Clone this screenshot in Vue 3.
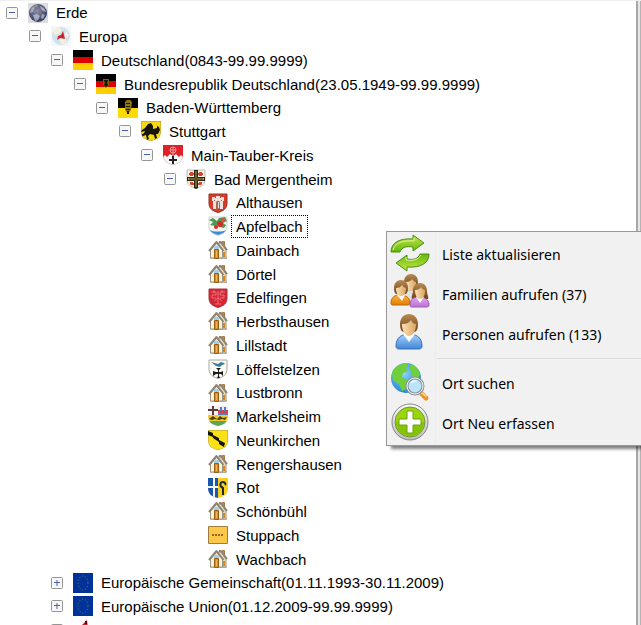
<template>
  <div class="app">
    <!-- Symbole -->
    <svg class="sprite" aria-hidden="true">
      <defs>
        <linearGradient id="g-green" x1="0" y1="0" x2="0" y2="1">
          <stop offset="0" stop-color="#c8e64a" />
          <stop offset="1" stop-color="#62b80c" />
        </linearGradient>
        <linearGradient id="g-blue" x1="0" y1="0" x2="0" y2="1">
          <stop offset="0" stop-color="#a9d2fa" />
          <stop offset="1" stop-color="#3f86d8" />
        </linearGradient>
        <linearGradient id="g-orange" x1="0" y1="0" x2="0" y2="1">
          <stop offset="0" stop-color="#fbb33c" />
          <stop offset="1" stop-color="#e27d00" />
        </linearGradient>
        <linearGradient id="g-violet" x1="0" y1="0" x2="0" y2="1">
          <stop offset="0" stop-color="#e3a6ee" />
          <stop offset="1" stop-color="#bd70d4" />
        </linearGradient>
        <linearGradient id="g-hair" x1="0" y1="0" x2="0" y2="1">
          <stop offset="0" stop-color="#b98a52" />
          <stop offset="1" stop-color="#6e431b" />
        </linearGradient>
        <linearGradient id="g-skin" x1="0" y1="0" x2="1" y2="0">
          <stop offset="0" stop-color="#fbe0b4" />
          <stop offset="1" stop-color="#dba664" />
        </linearGradient>
        <linearGradient id="g-ring" x1="0" y1="0" x2="0" y2="1">
          <stop offset="0" stop-color="#fafafa" />
          <stop offset="1" stop-color="#bdbdbd" />
        </linearGradient>
        <radialGradient id="g-sea" cx=".4" cy=".35" r=".7">
          <stop offset="0" stop-color="#8fd6fb" />
          <stop offset="1" stop-color="#1f7fd0" />
        </radialGradient>
        <radialGradient id="g-earth" cx=".45" cy=".4" r=".6">
          <stop offset="0" stop-color="#8a90ac" />
          <stop offset="1" stop-color="#343b62" />
        </radialGradient>
        <clipPath id="c-shield">
          <path d="M0 0h20v10c0 6-4 9-10 10C4 19 0 16 0 10z" />
        </clipPath>
      </defs>

      <symbol id="i-erde" viewBox="0 0 20 20">
        <path fill="#dcdcde" d="M0 0h20v20H0z" />
        <circle cx="10" cy="10" r="9" fill="url(#g-earth)" />
        <g opacity=".7">
          <path fill="#c5cad8" d="M3 6c2-3 5-4 7-4l-1 3-3 1-1 3-3 1zM12 3l4 2 2 4-3-1-2-2zM5 12l4-1 3 2-2 4-3 1zM14 11l3 1-2 4-2-1z" />
          <path fill="#8b786e" d="M6 4l4-1 1 2-4 2zM10 8l4 1-1 2-3-1z" />
        </g>
      </symbol>
      <symbol id="i-europa" viewBox="0 0 20 20">
        <path fill="#f3f7fa" d="M0 0h20v20H0z" />
        <circle cx="10" cy="10" r="9" fill="#cfe3ee" />
        <path fill="#f5f0dc" d="M3 4l5-3 3 3-3 4-5 1zM8 13l6-1 2 3-5 4zM15 5l3 4-2 3-2-3z" />
        <path fill="#cf2430" d="M12 5l2 8-5-1-3 2 1-4 3-1z" />
      </symbol>
      <symbol id="i-de" viewBox="0 0 20 20">
        <path d="M0 0h20v7H0z" />
        <path fill="#dd0000" d="M0 7h20v6H0z" />
        <path fill="#ffce00" d="M0 13h20v7H0z" />
      </symbol>
      <symbol id="i-brd" viewBox="0 0 20 20">
        <path d="M0 0h20v7H0z" />
        <path fill="#dd0000" d="M0 7h20v6H0z" />
        <path fill="#ffce00" d="M0 13h20v7H0z" />
        <path fill="#7d5f00" d="M7 5h6v6l-3 3-3-3z" />
        <path fill="#1b1300" d="M8 6h4l-1 3 1 2-2 2-2-2 1-2z" />
      </symbol>
      <symbol id="i-bw" viewBox="0 0 20 20">
        <path d="M0 0h20v10H0z" />
        <path fill="#fddc05" d="M0 10h20v10H0z" />
        <path fill="#8f7810" d="M7 4l2-2h3l2 2-1 8-3 4-3-4z" />
        <path fill="#241c02" d="M8 5h4v1H8zM8 8h4v1H8zM8 11h4v1H8zM9 13h2v3H9z" />
      </symbol>
      <symbol id="i-stuttgart" viewBox="0 0 20 20">
        <g clip-path="url(#c-shield)">
          <path fill="#f8d810" stroke="#a59130" stroke-width="1" d="M0 0h20v10c0 6-4 9-10 10C4 19 0 16 0 10z" />
          <path fill="#17150a" d="M7 3l3-1 2 3v3l4-1v-2l2 1 1 3-2 4-2 0 1 4-2 1-1-4-4-1-2 2 1 3-2 1-1-5-3 1-1 2-1-3 3-2 1-2-4 1 1-2 3-2z" />
        </g>
      </symbol>
      <symbol id="i-mtk" viewBox="0 0 20 20">
        <g clip-path="url(#c-shield)">
          <path fill="#f8f6f6" stroke="#b9a8a8" d="M0 0h20v10c0 6-4 9-10 10C4 19 0 16 0 10z" />
          <path fill="#e02228" d="M0 0h20v12l-2-2-2 2-3-3-3 2-3-2-3 3-2-2-2 2z" />
          <circle cx="10" cy="5" r="3" fill="none" stroke="#ee9c9c" />
          <path stroke="#ee9c9c" d="M10 2v8M7 5h6" />
          <path fill="#252525" d="M9 11h2v3h3v2h-3v3H9v-3H6v-2h3z" />
        </g>
      </symbol>
      <symbol id="i-mergentheim" viewBox="0 0 20 20">
        <path fill="#f4f2ec" stroke="#bdbab2" d="M1 1h18v9c0 6-4 8-9 9.500-5-1.500-9-3.500-9-9.500z" />
        <path fill="#e0402f" d="M4 3h3v1h1v2H7v1H4V6H3V4h1zM13 3h3v1h1v2h-1v1h-3V6h-1V4h1zM4 13h3v1h1v2H5l-1-1zM13 13h3v2l-1 1h-3v-2h1z" />
        <path fill="#2b2811" d="M8 1h4v7h7v4h-7v7l-2 1-2-1v-7H1V8h7z" />
        <path fill="#b7a350" d="M9 2h2v16H9zM2 9h16v2H2z" />
        <path stroke="#2b2811" d="M10 2v16M3 10h14" />
      </symbol>
      <symbol id="i-althausen" viewBox="0 0 20 20">
        <path fill="#da3a26" stroke="#8f3429" d="M1 1h18v9c0 6-4 8-9 9.500-5-1.500-9-3.500-9-9.500z" />
        <path fill="#ece4dc" d="M4 4h3v1h1V3h4v2h1V4h3v4h-1v8H5V8H4z" />
        <path fill="#a8685c" d="M8 10c0-3 4-3 4 0v6H8zM6 7h1v1H6zM13 7h1v1h-1z" />
        <path fill="#ece4dc" d="M10 9h1v6h-1z" />
      </symbol>
      <symbol id="i-apfelbach" viewBox="0 0 20 20">
        <path fill="#f7f7f3" stroke="#d0d4cd" d="M1 1h18v9c0 6-4 8-9 9.500-5-1.500-9-3.500-9-9.500z" />
        <path fill="#4b9b50" d="M1 4l4-2 4 3 2-3 6-1 2 4-4 2 3 2-2 3-4-1-2-3-3 2-5-1 3-3z" />
        <circle cx="12" cy="8" r="3" fill="#d62a28" />
        <circle cx="8" cy="11" r="2" fill="#d62a28" />
        <circle cx="15" cy="4" r="2" fill="#dc5148" />
        <path fill="#3b8ed4" d="M2 14c4 2 12 2 16 0-1 2-4 4-8 5-4-1-7-3-8-5z" />
      </symbol>
      <symbol id="i-haus" viewBox="0 0 20 20">
        <path fill="#c9c9c4" d="M2 17h17v2H2z" />
        <path fill="#d98a3a" stroke="#a87442" d="M14.500 1.500h2v7h-2z" />
        <path fill="#e6dcc2" stroke="#9c9484" d="M10 3h3l5 7v8h-6z" />
        <path fill="#fbf3da" stroke="#9c9484" d="M2.500 10L8.500 3.500l6 6.500v8h-12z" />
        <path fill="none" stroke="#8f8472" stroke-width="2" stroke-linejoin="round" d="M1 11l7.500-9 7 9M11 2h2l6 8" />
        <path fill="#de8d1e" stroke="#9a5d14" d="M6.500 9.500h4v9h-4z" />
        <path fill="#9fcdf0" d="M6 8c0-3 5-3 5 0v1H6z" />
        <path fill="#f5b554" d="M8 11h1v6H8z" />
        <path fill="#d9861c" d="M15 12h2v5h-2z" />
      </symbol>
      <symbol id="i-edelfingen" viewBox="0 0 20 20">
        <path fill="#d92331" stroke="#a33640" d="M1 1h18v9c0 6-4 8-9 9.500-5-1.500-9-3.500-9-9.500z" />
        <path fill="none" stroke="#e3757d" d="M3 4h5v3H4v3h4M17 4h-5v3h4v3h-4M6 2v3M14 2v3M10 3v13M6 13l4-3 4 3M7 16h6" />
      </symbol>
      <symbol id="i-loeffel" viewBox="0 0 20 20">
        <path fill="#f8f9f1" stroke="#a9aa9c" d="M1 1h18v9c0 6-4 8-9 9.500-5-1.500-9-3.500-9-9.500z" />
        <path fill="#3b7c9b" d="M3 3l7 2 3-2 3 1 1 1-3 1-2 2-4-1z" />
        <path fill="#1c1c1c" d="M8 9h5l-2 2v2h2l2-1v5l-2-2h-2v2l1 2H9l1-2v-2H8l-3 2v-5l3 1h2v-2z" />
      </symbol>
      <symbol id="i-markelsheim" viewBox="0 0 20 20">
        <g clip-path="url(#c-shield)">
          <path fill="#f4f1ee" d="M0 0h10v9H0z" />
          <path fill="#5b3a3c" d="M4 0h2v3h4v2H6v4H4V5H0V3h4z" />
          <path fill="#e8eef6" d="M10 0h10v5H10z" />
          <path fill="#d9424c" d="M10 4h10v5H10z" />
          <path fill="#4c7fc4" d="M12 1h2v4h-2zM16 1h2v4h-2zM10 7h10v2H10z" />
          <path fill="#f2c92f" d="M0 9h20v6H0z" />
          <path fill="#4c4216" d="M1 13l4-3 4 3 3-3 3 2 4-1-2 3-3-1-3 1-4-1-3 1z" />
          <path fill="#5fa653" d="M0 15h20v5H0z" />
        </g>
      </symbol>
      <symbol id="i-neunkirchen" viewBox="0 0 20 20">
        <g clip-path="url(#c-shield)">
          <path fill="#fbe116" stroke="#a69b3b" d="M0 0h20v10c0 6-4 9-10 10C4 19 0 16 0 10z" />
          <path fill="#13130c" d="M0 1l5 2v4L0 5zM5 5l6 3v4L5 8zM11 10l6 3-1 4-5-3z" />
        </g>
      </symbol>
      <symbol id="i-rot" viewBox="0 0 20 20">
        <g clip-path="url(#c-shield)">
          <path fill="#1c55ad" d="M0 0h10v20H0z" />
          <path fill="#f3f6fb" d="M5 0h2v20H5zM0 8h10v2H0z" />
          <path fill="#f9cf1d" d="M10 0h10v20H10z" />
          <path fill="none" stroke="#1d2a38" stroke-width="2" d="M15 17v-7c-4-2-3-6 0-6 2 0 3 2 2 3" />
        </g>
      </symbol>
      <symbol id="i-stuppach" viewBox="0 0 20 20">
        <path fill="#fdc84a" stroke="#9c7d40" stroke-width="1" d="M.5 1.500h19v17H.5z" />
        <path stroke="#8b6c27" stroke-width="2" stroke-dasharray="2 1" d="M4 10h12" />
      </symbol>
      <symbol id="i-eu" viewBox="0 0 20 20">
        <path fill="#003399" d="M0 0h20v20H0z" />
        <ellipse cx="10" cy="10" rx="5" ry="7" fill="none" stroke="#74805c" stroke-dasharray="1 2" />
      </symbol>
      <symbol id="i-ewg" viewBox="0 0 20 20">
        <path fill="#c8202c" d="M14 0l1 8-5 6-6 2 3-9z" />
        <path fill="#3d1518" d="M12 1h2v3h-2z" />
      </symbol>

      <symbol id="m-refresh" viewBox="0 0 40 40">
        <path stroke="#4b8f12" stroke-linejoin="round" fill="url(#g-green)" d="M1 18C1 9 9 4 23 5V1l11 8-11 8v-4C16 12 12 13 10 18z" />
        <path fill="none" stroke="#e3f59b" d="M3 16C5 9 12 6 24 7V4" />
        <g transform="rotate(180 20 19)">
          <path stroke="#4b8f12" stroke-linejoin="round" fill="url(#g-green)" d="M1 18C1 9 9 4 23 5V1l11 8-11 8v-4C16 12 12 13 10 18z" />
        </g>
        <path fill="none" stroke="#e3f59b" d="M31 21c-3 5-8 6-15 5v-3" />
      </symbol>
      <symbol id="m-family" viewBox="0 0 40 40">
        <path fill="#e3e3e3" stroke="#999" d="M12 24c0-6 4-8 8-8s9 2 9 8v4H12z" />
        <path fill="url(#g-hair)" d="M14 8c0-5 3-8 7-8s7 3 7 8-2 6-3 6h-8c-2 0-3-2-3-6z" />
        <path fill="url(#g-skin)" d="M16 8c3 0 5-1 6-3 1 2 3 3 4 3 0 6-2 9-5 9s-5-4-5-9z" />
        <path fill="url(#g-orange)" stroke="#b86a0c" d="M1 29c0-6 4-8 9-8s10 2 10 8c0 2-2 2-3 2H3c-1 0-2 0-2-2z" />
        <path fill="#fff" d="M7 21h8l-3 6z" />
        <path fill="url(#g-hair)" d="M4 14c0-5 3-8 7-8s7 3 7 8-2 6-3 6H7c-2 0-3-2-3-6z" />
        <path fill="url(#g-skin)" d="M6 14c3 0 5-1 6-3 1 2 3 3 4 3 0 6-2 8-5 8s-5-3-5-8z" />
        <path fill="url(#g-hair)" d="M23 16c0-4 3-7 7-7 5 0 7 4 7 8s2 5 1 8H22c-1-3 1-5 1-9z" />
        <path fill="url(#g-violet)" stroke="#9f5cb4" d="M20 31c0-6 4-8 9-8s10 2 10 8c0 2-2 2-3 2H22c-1 0-2 0-2-2z" />
        <path fill="#fff" d="M26 23h8l-4 6z" />
        <path fill="url(#g-skin)" d="M25 16c3 0 5-1 6-3 1 2 3 3 4 3 0 6-2 9-5 9s-5-4-5-9z" />
      </symbol>
      <symbol id="m-person" viewBox="0 0 40 40">
        <path fill="url(#g-blue)" stroke="#3a73b8" d="M6 32c0-8 5-12 13-12s13 4 13 12c0 3-2 3-4 3H10c-2 0-4 0-4-3z" />
        <path fill="#fff" d="M13 20h12l-6 8z" />
        <path fill="url(#g-hair)" d="M10 10c0-6 4-10 9-10s9 4 9 10-2 8-4 8H14c-2 0-4-2-4-8z" />
        <path fill="url(#g-skin)" d="M12 10c4 0 7-1 9-4 1 3 3 4 5 4 0 7-3 12-7 12s-7-5-7-12z" />
      </symbol>
      <symbol id="m-search" viewBox="0 0 40 40">
        <circle cx="16" cy="15" r="15" fill="url(#g-sea)" />
        <path fill="#6fd03c" d="M3 7c4-5 9-7 15-6l-2 4 2 3-5 2-1 4 5 3 2 4-3 5-4 2-3-7-6-4c-1-4-1-7 0-10zM21 1c5 2 8 6 9 11l-3 4-5-3-1-5-2-2z" />
        <path stroke="#e99624" stroke-width="5" stroke-linecap="round" d="M32 31l4 4" />
        <path stroke="#fbd089" stroke-width="2" stroke-linecap="round" d="M32 30l4 3" />
        <circle cx="25" cy="23" r="8" fill="#b9e4fa" stroke="#87919c" stroke-width="3" />
        <circle cx="25" cy="23" r="8" fill="none" stroke="#f5f7f8" stroke-width="1" />
        <path fill="#e8f8ff" d="M20 21c1-4 5-5 8-3-3 0-6 2-8 3z" />
      </symbol>
      <symbol id="m-add" viewBox="0 0 40 40">
        <circle cx="20" cy="19" r="18" fill="url(#g-ring)" stroke="#858585" />
        <circle cx="20" cy="19" r="15" fill="#9ad60c" stroke="#7c8f50" />
        <path fill="#83c407" d="M6 19h28c0 8-6 14-14 14S6 27 6 19z" />
        <path fill="#fff" stroke="#6fa30c" stroke-linejoin="round" d="M17 8h6v8h8v6h-8v8h-6v-8H9v-6h8z" />
      </symbol>
    </svg>

    <!-- Ortsbaum -->
    <ul class="tree" role="tree" aria-label="Orte">
      <li
        v-for="n in visible"
        :key="n.name"
        class="node"
        role="treeitem"
        :aria-level="n.level + 1"
        :aria-selected="n.name === selected"
        :style="{ paddingLeft: indent(n.level) }"
      >
        <button
          v-if="!n.leaf"
          class="toggle"
          :aria-expanded="!closed.includes(n.name)"
          :aria-label="n.name"
          @click="toggle(n.name)"
        >
          <svg viewBox="0 0 12 12" aria-hidden="true">
            <rect x=".5" y=".5" width="11" height="11" rx="1" fill="#f7f7f7" stroke="#959595" />
            <path stroke="#4660ad" d="M3 5.500h6" />
            <path v-if="closed.includes(n.name)" stroke="#4660ad" d="M6 3v6" />
          </svg>
        </button>
        <span v-else class="toggle"></span>
        <svg class="icon" aria-hidden="true"><use :href="'#i-' + n.icon" /></svg>
        <button
          class="label"
          :class="{ selected: n.name === selected }"
          @click="selected = n.name"
        >{{ n.name }}</button>
      </li>
    </ul>

    <div class="edge"></div>

    <!-- Kontextmenü -->
    <div class="menu" role="menu">
      <template v-for="m in menu" :key="m.text">
        <hr v-if="m.divider" />
        <button class="menu-item" role="menuitem">
          <svg aria-hidden="true"><use :href="'#m-' + m.icon" /></svg>
          <span>{{ m.text }}</span>
        </button>
      </template>
    </div>
  </div>
</template>

<script setup>
import { ref, computed } from 'vue'

const nodes = [
  { level: 0, icon: 'erde', name: 'Erde' },
  { level: 1, icon: 'europa', name: 'Europa' },
  { level: 2, icon: 'de', name: 'Deutschland(0843-99.99.9999)' },
  { level: 3, icon: 'brd', name: 'Bundesrepublik Deutschland(23.05.1949-99.99.9999)' },
  { level: 4, icon: 'bw', name: 'Baden-Württemberg' },
  { level: 5, icon: 'stuttgart', name: 'Stuttgart' },
  { level: 6, icon: 'mtk', name: 'Main-Tauber-Kreis' },
  { level: 7, icon: 'mergentheim', name: 'Bad Mergentheim' },
  { level: 8, icon: 'althausen', name: 'Althausen', leaf: true },
  { level: 8, icon: 'apfelbach', name: 'Apfelbach', leaf: true },
  { level: 8, icon: 'haus', name: 'Dainbach', leaf: true },
  { level: 8, icon: 'haus', name: 'Dörtel', leaf: true },
  { level: 8, icon: 'edelfingen', name: 'Edelfingen', leaf: true },
  { level: 8, icon: 'haus', name: 'Herbsthausen', leaf: true },
  { level: 8, icon: 'haus', name: 'Lillstadt', leaf: true },
  { level: 8, icon: 'loeffel', name: 'Löffelstelzen', leaf: true },
  { level: 8, icon: 'haus', name: 'Lustbronn', leaf: true },
  { level: 8, icon: 'markelsheim', name: 'Markelsheim', leaf: true },
  { level: 8, icon: 'neunkirchen', name: 'Neunkirchen', leaf: true },
  { level: 8, icon: 'haus', name: 'Rengershausen', leaf: true },
  { level: 8, icon: 'rot', name: 'Rot', leaf: true },
  { level: 8, icon: 'haus', name: 'Schönbühl', leaf: true },
  { level: 8, icon: 'stuppach', name: 'Stuppach', leaf: true },
  { level: 8, icon: 'haus', name: 'Wachbach', leaf: true },
  { level: 2, icon: 'eu', name: 'Europäische Gemeinschaft(01.11.1993-30.11.2009)' },
  { level: 2, icon: 'eu', name: 'Europäische Union(01.12.2009-99.99.9999)' },
  { level: 2, icon: 'ewg', name: 'EWG(25.03.1957-31.10.1993)' }
]

const menu = [
  { icon: 'refresh', text: 'Liste aktualisieren' },
  { icon: 'family', text: 'Familien aufrufen (37)' },
  { icon: 'person', text: 'Personen aufrufen (133)' },
  { icon: 'search', text: 'Ort suchen', divider: true },
  { icon: 'add', text: 'Ort Neu erfassen' }
]

const selected = ref('Apfelbach')
const closed = ref(nodes.slice(24).map(n => n.name))

// Kinder zugeklappter Knoten ausblenden
const visible = computed(() => {
  let hideBelow = Infinity
  return nodes.filter(n => {
    if (n.level > hideBelow) return false
    hideBelow = closed.value.includes(n.name) ? n.level : Infinity
    return true
  })
})

const indent = level => Math.round(level * 22.5) + 6 + 'px'

const toggle = name => {
  closed.value = closed.value.includes(name)
    ? closed.value.filter(c => c !== name)
    : [...closed.value, name]
}
</script>

<style>
body {
  margin: 0;
}
</style>

<style scoped>
.app {
  position: relative;
  display: flex;
  height: 100vh;
  overflow: hidden;
  box-sizing: border-box;
  border-top: 1px solid #f0f0f0;
  background: #fff;
  color: #000;
  font-family: "Liberation Sans", Arial, sans-serif;
  font-size: 15px;
}

.sprite {
  position: absolute;
  width: 0;
  height: 0;
}

button {
  padding: 0;
  border: none;
  background: none;
  color: inherit;
  font: inherit;
}

/* ===== Baum ===== */
.tree {
  flex: 1;
  margin: 0;
  padding: 0;
  list-style: none;
}

.node {
  display: flex;
  align-items: center;
  height: 24px;
}

.node:nth-child(4n + 1) {
  height: 23px;
}

.toggle {
  flex: none;
  width: 12px;
  height: 12px;
  margin-right: 10px;
}

.toggle svg {
  display: block;
  width: 12px;
  height: 12px;
}

.icon {
  flex: none;
  width: 20px;
  height: 20px;
}

.label {
  margin-left: 3px;
  padding: 0 4px;
  border: 1px solid transparent;
  line-height: 21px;
  white-space: nowrap;
}

.label.selected {
  border: 1px dotted #000;
}

/* ===== rechter Rand ===== */
.edge {
  flex: none;
  width: 2px;
  border-left: 2px solid #a8a8a8;
  border-right: 1px solid #b4b4b4;
  background: #e6e6e6;
}

/* ===== Kontextmenü ===== */
.menu {
  position: absolute;
  top: 230px;
  left: 386px;
  right: -6px;
  padding: 2px 0;
  border: 1px solid #979797;
  background: linear-gradient(90deg, #f1f1f1 48px, #ececec 48px, #ececec 49px, #f1f1f1 49px);
  box-shadow: 4px 4px 3px -1px rgba(0, 0, 0, 0.5);
  font-family: "Noto Sans", "Segoe UI", sans-serif;
  font-size: 14px;
}

.menu-item {
  display: flex;
  align-items: center;
  width: 100%;
  height: 40px;
  padding-left: 3px;
  gap: 12px;
  text-align: left;
}

.menu-item:hover {
  background: #dcebfa;
}

.menu-item svg {
  flex: none;
  width: 40px;
  height: 40px;
}

hr {
  height: 1px;
  margin: 4px 0 4px 50px;
  border: none;
  background: #dcdcdc;
}
</style>
